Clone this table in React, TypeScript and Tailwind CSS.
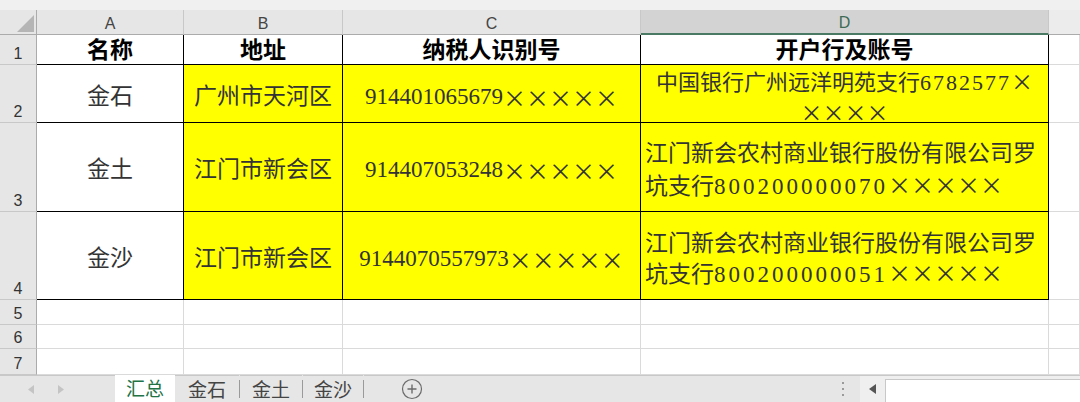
import React from "react";

const X = () => (
    <span className="inline-block w-[1em] text-center font-['Noto_Sans_CJK_SC',sans-serif]">×</span>
);

const xs = (n: number) => Array.from({ length: n }, (_, i) => <X key={i} />);

const colHead = "flex items-center justify-center pt-[3px] bg-[#e6e6e6] border-r border-b border-r-[#c8c8c8] border-b-[#ababab] text-[16px] text-[#444]";
const rowHead = "flex items-end justify-center pb-[2px] bg-[#e6e6e6] border-r border-b border-r-[#ababab] border-b-[#c8c8c8] text-[16px] leading-none text-[#333]";
const tableCell = "flex items-center justify-center border-r border-b border-black text-[23px] text-[#333]";
const gridCell = "border-r border-b border-[#dadada]";

const rows = [
    {
        num: 2,
        name: "金石",
        addr: "广州市天河区",
        tax: <>914401065679{xs(5)}</>,
        bank: (
            <div className="text-center leading-[28px] text-[22px]">
                <div className="whitespace-nowrap">中国银行广州远洋明苑支行<span className="tracking-[2px]">6782577</span><X /></div>
                <div className="whitespace-nowrap">{xs(4)}</div>
            </div>
        ),
    },
    {
        num: 3,
        name: "金土",
        addr: "江门市新会区",
        tax: <>914407053248{xs(5)}</>,
        bank: (
            <div className="text-left leading-[30px] w-full pl-[4px]">
                <div className="whitespace-nowrap">江门新会农村商业银行股份有限公司罗</div>
                <div className="whitespace-nowrap">坑支行<span className="tracking-[3px]">800200000070</span>{xs(5)}</div>
            </div>
        ),
    },
    {
        num: 4,
        name: "金沙",
        addr: "江门市新会区",
        tax: <>9144070557973{xs(5)}</>,
        bank: (
            <div className="text-left leading-[28px] w-full pl-[4px]">
                <div className="whitespace-nowrap">江门新会农村商业银行股份有限公司罗</div>
                <div className="whitespace-nowrap">坑支行<span className="tracking-[3px]">800200000051</span>{xs(5)}</div>
            </div>
        ),
    },
];

function TabBar() {
    return (
        <div className="h-[27px] flex bg-[#e6e6e6] text-[19px] font-['Noto_Sans_CJK_SC',sans-serif] text-[#444]">
            <div className="w-[115px] flex items-center gap-[24px] pl-[28px] border-t border-[#c8c8c8]">
                <svg width="6" height="9" viewBox="0 0 6 9"><polygon points="6,0 6,9 0,4.5" fill="#c4c4c4" /></svg>
                <svg width="6" height="9" viewBox="0 0 6 9"><polygon points="0,0 0,9 6,4.5" fill="#c4c4c4" /></svg>
            </div>
            <div className="w-[60px] flex items-center justify-center bg-white text-[#217346]">汇总</div>
            <div className="w-[64px] flex items-center justify-center border-t border-t-[#c8c8c8]">
                <span>金石</span>
            </div>
            <div className="w-px h-[18px] self-center bg-[#9a9a9a]" />
            <div className="w-[62px] flex items-center justify-center border-t border-t-[#c8c8c8]">
                <span>金土</span>
            </div>
            <div className="w-px h-[18px] self-center bg-[#9a9a9a]" />
            <div className="w-[60px] flex items-center justify-center border-t border-t-[#c8c8c8]">
                <span>金沙</span>
            </div>
            <div className="w-px h-[18px] self-center bg-[#9a9a9a]" />
            <div className="flex-1 flex items-center pl-[37px] border-t border-t-[#c8c8c8]">
                <svg width="22" height="22" viewBox="0 0 22 22">
                    <circle cx="11" cy="11" r="9.5" fill="none" stroke="#6b6b6b" strokeWidth="1.2" />
                    <path d="M11 6.5v9M6.5 11h9" stroke="#6b6b6b" strokeWidth="1.4" />
                </svg>
                <div className="ml-auto mr-[16px] flex flex-col gap-[4px]">
                    <span className="w-[2px] h-[2px] bg-[#9a9a9a]" />
                    <span className="w-[2px] h-[2px] bg-[#9a9a9a]" />
                    <span className="w-[2px] h-[2px] bg-[#9a9a9a]" />
                </div>
            </div>
            <div className="w-[25px] flex items-center justify-center bg-[#efefef] border-t border-t-[#c8c8c8]">
                <svg width="7" height="10" viewBox="0 0 7 10"><polygon points="7,0 7,10 0,5" fill="#555" /></svg>
            </div>
            <div className="w-[195px] flex flex-col border-t border-t-[#c8c8c8]">
                <div className="h-[3px] bg-[#efefef]" />
                <div className="flex-1 bg-white border-l border-t border-[#c8c8c8]" />
            </div>
        </div>
    );
}

export default function App() {
    return (
        <div className="w-[1080px] h-[402px] flex flex-col bg-white overflow-hidden font-['Liberation_Serif','Noto_Sans_CJK_SC',serif]">
            <div className="h-[10px] bg-[#f0f0f0]" />
            <div className="grid grid-cols-[37px_147px_159px_298px_408px_1fr] grid-rows-[25px_30px_58px_89px_88px_25px_24px_26px]">
                {/* column headers */}
                <div className="flex items-end justify-end pr-[2px] pb-[2px] bg-[#e6e6e6] border-r border-b border-[#ababab]">
                    <svg width="17" height="17" viewBox="0 0 17 17"><polygon points="17,0 17,17 0,17" fill="#b5b5b5" /></svg>
                </div>
                <div className={colHead + " font-['Liberation_Sans',sans-serif]"}>A</div>
                <div className={colHead + " font-['Liberation_Sans',sans-serif]"}>B</div>
                <div className={colHead + " font-['Liberation_Sans',sans-serif]"}>C</div>
                <div className="flex items-center justify-center pt-[3px] bg-[#d3d3d3] border-r border-r-[#c8c8c8] border-b-2 border-b-[#4a7a64] text-[16px] text-[#3d6b55] font-['Liberation_Sans',sans-serif]">D</div>
                <div className="bg-[#ececec] border-b border-[#ababab]" />

                {/* row 1 */}
                <div className={rowHead + " font-['Liberation_Sans',sans-serif]"}>1</div>
                <div className={tableCell + " pt-[4px] font-bold text-black"}>名称</div>
                <div className={tableCell + " pt-[4px] font-bold text-black"}>地址</div>
                <div className={tableCell + " pt-[4px] font-bold text-black"}>纳税人识别号</div>
                <div className={tableCell + " pt-[4px] font-bold text-black"}>开户行及账号</div>
                <div className={gridCell} />

                {rows.map((r) => (
                    <React.Fragment key={r.num}>
                        <div className={rowHead + " font-['Liberation_Sans',sans-serif]"}>{r.num}</div>
                        <div className={tableCell + " pt-[7px]"}>{r.name}</div>
                        <div className={tableCell + " pt-[7px] bg-[#ffff00]"}>{r.addr}</div>
                        <div className={tableCell + " pt-[7px] bg-[#ffff00] whitespace-nowrap"}>{r.tax}</div>
                        <div className={tableCell + " pt-[7px] bg-[#ffff00]"}>{r.bank}</div>
                        <div className={gridCell} />
                    </React.Fragment>
                ))}

                {[5, 6, 7].map((n) => (
                    <React.Fragment key={n}>
                        <div className={rowHead + " font-['Liberation_Sans',sans-serif]"}>{n}</div>
                        <div className={gridCell} />
                        <div className={gridCell} />
                        <div className={gridCell} />
                        <div className={gridCell} />
                        <div className={gridCell} />
                    </React.Fragment>
                ))}
            </div>
            <TabBar />
        </div>
    );
}
